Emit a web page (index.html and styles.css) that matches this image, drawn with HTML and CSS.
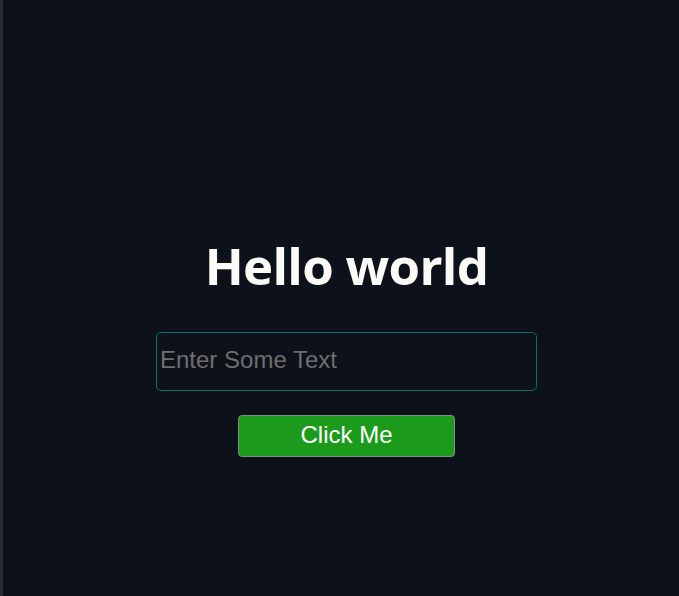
FILE: index.html
```html
<!DOCTYPE html>
<html>
<head>
<meta charset="utf-8">
<link rel="stylesheet" href="styles.css">
</head>
<body>
<main class="app">
  <h1 class="title">Hello world</h1>
  <input class="text-input" type="text" placeholder="Enter Some Text">
  <button class="btn">Click Me</button>
</main>
</body>
</html>
```
FILE: styles.css
```css
html, body {
  margin: 0;
  padding: 0;
  height: 100%;
}
body {
  background: #0d111a;
  border-left: 3px solid #2b2b2b;
  box-sizing: border-box;
}
.app {
  display: flex;
  flex-direction: column;
  align-items: center;
  padding-top: 233px;
  padding-left: 11px;
}
.title {
  margin: 0;
  font-family: "Open Sans", sans-serif;
  font-weight: 700;
  font-size: 51px;
  line-height: 64px;
  color: #fbfaf6;
  letter-spacing: -0.7px;
}
.text-input {
  margin-top: 35px;
  width: 381px;
  height: 59px;
  box-sizing: border-box;
  background: #0d111a;
  border: 1px solid #0b6e6a;
  border-radius: 5px;
  padding: 0 3px 3px;
  font-family: "Liberation Sans", Arial, sans-serif;
  font-size: 24px;
  color: #ddd;
  outline: none;
}
.text-input::placeholder {
  color: #6e6e6e;
}
.btn {
  margin-top: 24px;
  width: 217px;
  height: 42px;
  background: #1b9a1c;
  border: 1px solid #8a8a80;
  border-radius: 4px;
  color: #ffffff;
  font-family: "Liberation Sans", Arial, sans-serif;
  font-size: 24px;
  padding: 0 0 2px;
}
```
